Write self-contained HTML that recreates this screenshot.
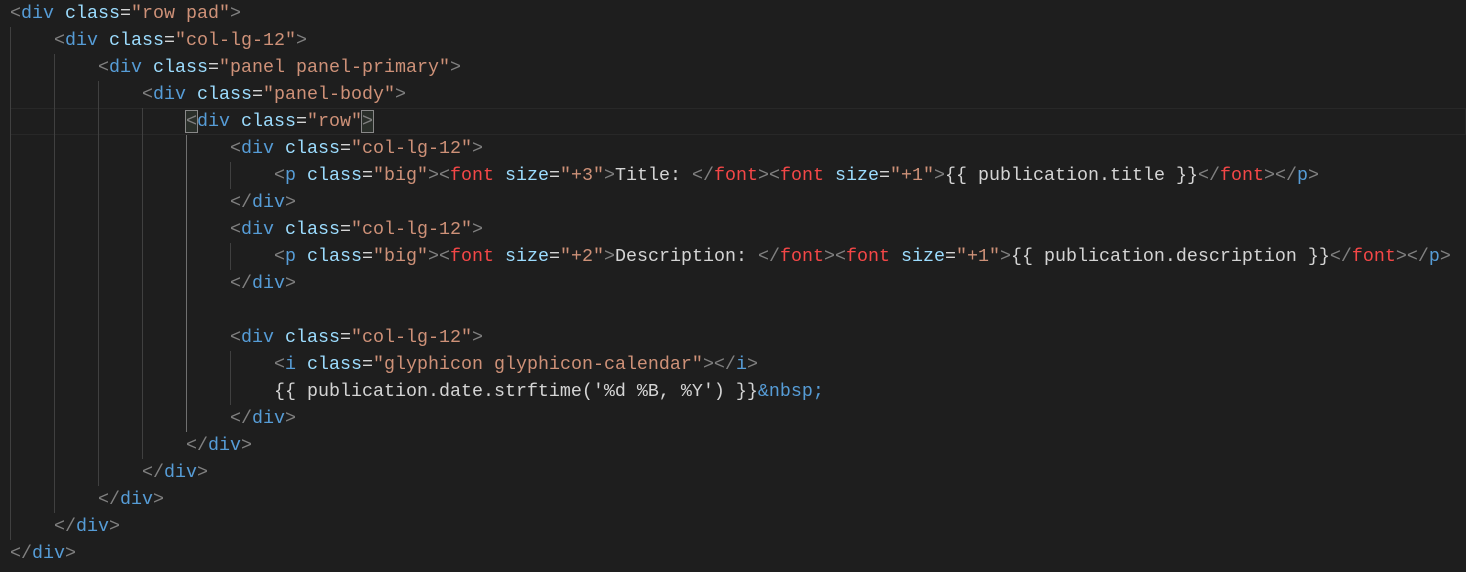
<!DOCTYPE html>
<html><head><meta charset="utf-8"><style>
html,body{margin:0;padding:0;background:#1e1e1e;width:1466px;height:572px;overflow:hidden}
#c{position:relative;width:1466px;height:572px;font-family:"Liberation Mono",monospace;font-size:18.33px;color:#d4d4d4}
.l{position:absolute;left:10px;height:27px;line-height:27px;white-space:pre}
.g{position:absolute;width:1px;background:#404040}
.t{color:#569cd6}.a{color:#9cdcfe}.s{color:#ce9178}.p{color:#808080}.r{color:#f44747}
.hl{position:absolute;left:10px;right:0;top:108px;height:25px;border:1px solid #282828;border-left:none}
.bm{outline:1px solid #888;background:#2a2f2a}
</style></head><body><div id="c">
<div class="hl"></div>
<div class="g" style="left:10px;top:27px;height:513px"></div>
<div class="g" style="left:54px;top:54px;height:459px"></div>
<div class="g" style="left:98px;top:81px;height:405px"></div>
<div class="g" style="left:142px;top:108px;height:351px"></div>
<div class="g" style="left:186px;top:135px;height:297px;background:#707070"></div>
<div class="g" style="left:230px;top:162px;height:27px"></div>
<div class="g" style="left:230px;top:243px;height:27px"></div>
<div class="g" style="left:230px;top:351px;height:54px"></div>
<div class="l" style="top:0"><span class="p">&lt;</span><span class="t">div</span> <span class="a">class</span>=<span class="s">"row pad"</span><span class="p">&gt;</span></div>
<div class="l" style="top:27px">    <span class="p">&lt;</span><span class="t">div</span> <span class="a">class</span>=<span class="s">"col-lg-12"</span><span class="p">&gt;</span></div>
<div class="l" style="top:54px">        <span class="p">&lt;</span><span class="t">div</span> <span class="a">class</span>=<span class="s">"panel panel-primary"</span><span class="p">&gt;</span></div>
<div class="l" style="top:81px">            <span class="p">&lt;</span><span class="t">div</span> <span class="a">class</span>=<span class="s">"panel-body"</span><span class="p">&gt;</span></div>
<div class="l" style="top:108px">                <span class="p bm">&lt;</span><span class="t">div</span> <span class="a">class</span>=<span class="s">"row"</span><span class="p bm">&gt;</span></div>
<div class="l" style="top:135px">                    <span class="p">&lt;</span><span class="t">div</span> <span class="a">class</span>=<span class="s">"col-lg-12"</span><span class="p">&gt;</span></div>
<div class="l" style="top:162px">                        <span class="p">&lt;</span><span class="t">p</span> <span class="a">class</span>=<span class="s">"big"</span><span class="p">&gt;&lt;</span><span class="r">font</span> <span class="a">size</span>=<span class="s">"+3"</span><span class="p">&gt;</span>Title: <span class="p">&lt;/</span><span class="r">font</span><span class="p">&gt;&lt;</span><span class="r">font</span> <span class="a">size</span>=<span class="s">"+1"</span><span class="p">&gt;</span>{{ publication.title }}<span class="p">&lt;/</span><span class="r">font</span><span class="p">&gt;&lt;/</span><span class="t">p</span><span class="p">&gt;</span></div>
<div class="l" style="top:189px">                    <span class="p">&lt;/</span><span class="t">div</span><span class="p">&gt;</span></div>
<div class="l" style="top:216px">                    <span class="p">&lt;</span><span class="t">div</span> <span class="a">class</span>=<span class="s">"col-lg-12"</span><span class="p">&gt;</span></div>
<div class="l" style="top:243px">                        <span class="p">&lt;</span><span class="t">p</span> <span class="a">class</span>=<span class="s">"big"</span><span class="p">&gt;&lt;</span><span class="r">font</span> <span class="a">size</span>=<span class="s">"+2"</span><span class="p">&gt;</span>Description: <span class="p">&lt;/</span><span class="r">font</span><span class="p">&gt;&lt;</span><span class="r">font</span> <span class="a">size</span>=<span class="s">"+1"</span><span class="p">&gt;</span>{{ publication.description }}<span class="p">&lt;/</span><span class="r">font</span><span class="p">&gt;&lt;/</span><span class="t">p</span><span class="p">&gt;</span></div>
<div class="l" style="top:270px">                    <span class="p">&lt;/</span><span class="t">div</span><span class="p">&gt;</span></div>
<div class="l" style="top:324px">                    <span class="p">&lt;</span><span class="t">div</span> <span class="a">class</span>=<span class="s">"col-lg-12"</span><span class="p">&gt;</span></div>
<div class="l" style="top:351px">                        <span class="p">&lt;</span><span class="t">i</span> <span class="a">class</span>=<span class="s">"glyphicon glyphicon-calendar"</span><span class="p">&gt;&lt;/</span><span class="t">i</span><span class="p">&gt;</span></div>
<div class="l" style="top:378px">                        {{ publication.date.strftime('%d %B, %Y') }}<span class="t">&amp;nbsp;</span></div>
<div class="l" style="top:405px">                    <span class="p">&lt;/</span><span class="t">div</span><span class="p">&gt;</span></div>
<div class="l" style="top:432px">                <span class="p">&lt;/</span><span class="t">div</span><span class="p">&gt;</span></div>
<div class="l" style="top:459px">            <span class="p">&lt;/</span><span class="t">div</span><span class="p">&gt;</span></div>
<div class="l" style="top:486px">        <span class="p">&lt;/</span><span class="t">div</span><span class="p">&gt;</span></div>
<div class="l" style="top:513px">    <span class="p">&lt;/</span><span class="t">div</span><span class="p">&gt;</span></div>
<div class="l" style="top:540px"><span class="p">&lt;/</span><span class="t">div</span><span class="p">&gt;</span></div>
</div></body></html>
